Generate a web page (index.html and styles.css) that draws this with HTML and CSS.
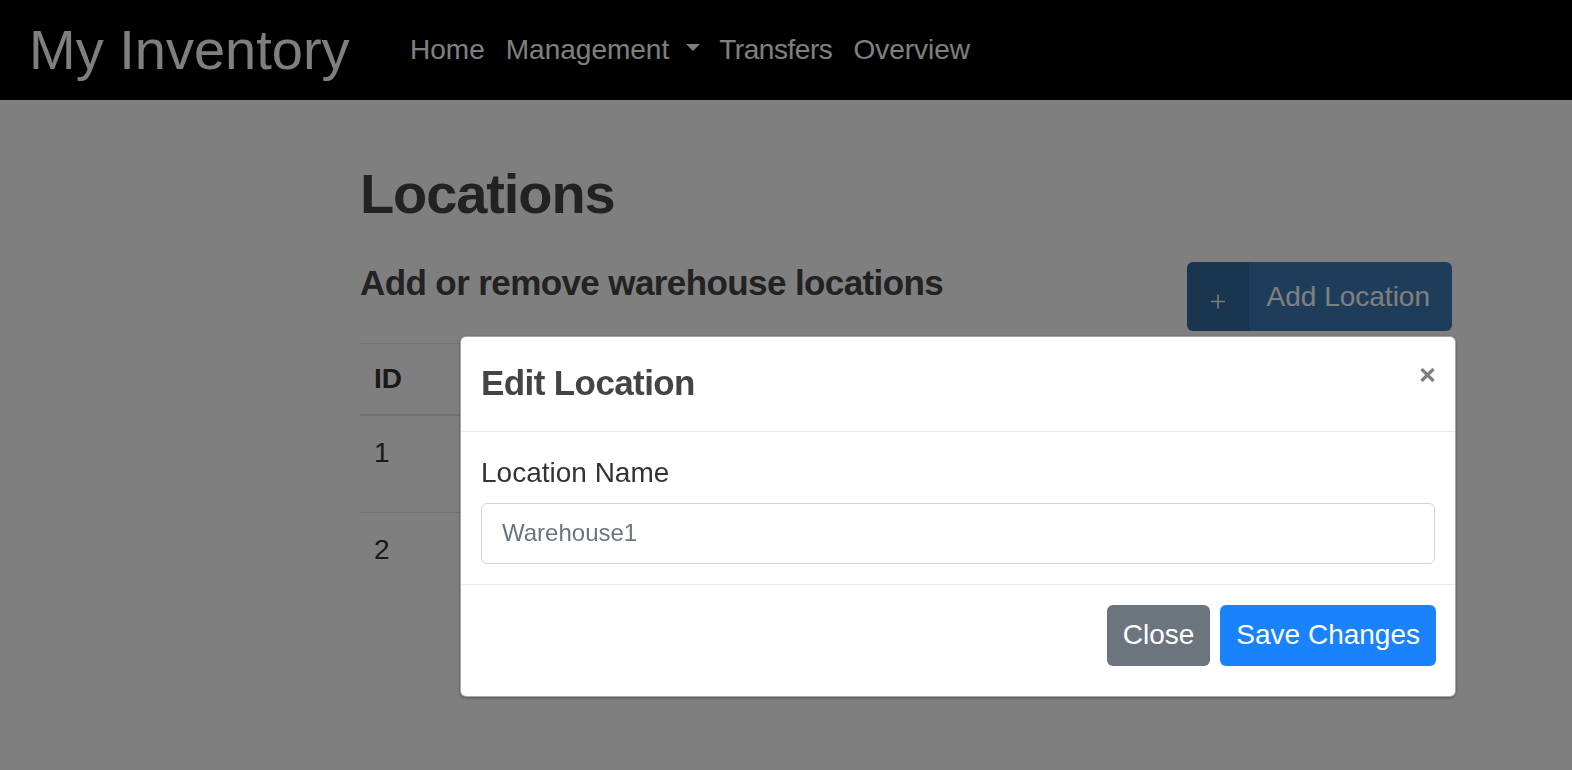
FILE: index.html
```html
<!DOCTYPE html>
<html lang="en">
<head>
<meta charset="utf-8">
<title>My Inventory - Locations</title>
<link rel="stylesheet" href="styles.css">
</head>
<body>
  <nav class="navbar">
    <a class="brand" href="#">My Inventory</a>
    <ul class="nav">
      <li><a class="nav-link" href="#">Home</a></li>
      <li><a class="nav-link dropdown-toggle" href="#">Management<span class="caret"></span></a></li>
      <li><a class="nav-link tight" href="#">Transfers</a></li>
      <li><a class="nav-link" href="#">Overview</a></li>
    </ul>
  </nav>

  <main class="container">
    <h1 class="page-title">Locations</h1>
    <div class="toolbar">
      <h4 class="subtitle">Add or remove warehouse locations</h4>
      <button class="btn-labeled" type="button">
        <span class="btn-label">
          <svg class="plus" width="14" height="15" viewBox="0 0 14 15" aria-hidden="true">
            <path d="M7 0.5V14.5M0 7.5H14" stroke="currentColor" stroke-width="1.7" fill="none"/>
          </svg>
        </span>
        <span class="btn-text">Add Location</span>
      </button>
    </div>

    <table class="table">
      <thead>
        <tr><th class="col-id">ID</th><th></th><th class="col-actions"></th></tr>
      </thead>
      <tbody>
        <tr><td>1</td><td></td><td><span class="row-actions"></span></td></tr>
        <tr><td>2</td><td></td><td><span class="row-actions"></span></td></tr>
      </tbody>
    </table>
  </main>

  <div class="backdrop"></div>

  <div class="modal">
    <div class="modal-dialog">
      <div class="modal-content">
        <div class="modal-header">
          <h5 class="modal-title">Edit Location</h5>
          <button class="close" type="button" aria-label="Close">
            <svg width="15" height="14" viewBox="0 0 15 14" aria-hidden="true">
              <path d="M1.5 1L13.5 13M13.5 1L1.5 13" stroke="currentColor" stroke-width="3.2" fill="none"/>
            </svg>
          </button>
        </div>
        <div class="modal-body">
          <label class="form-label" for="locName">Location Name</label>
          <input class="form-control" id="locName" type="text" value="Warehouse1">
        </div>
        <div class="modal-footer">
          <button class="btn btn-secondary" type="button">Close</button>
          <button class="btn btn-primary" type="button">Save Changes</button>
        </div>
      </div>
    </div>
  </div>
</body>
</html>
```

FILE: styles.css
```css
* { box-sizing: border-box; }

html, body { height: 100%; }

body {
  margin: 0;
  font-family: "Liberation Sans", Arial, Helvetica, sans-serif;
  font-size: 28px;
  line-height: 1.5;
  color: #333;
  background: #fff;
  overflow: hidden;
}

/* ---------- navbar ---------- */
.navbar {
  height: 100px;
  background: #000;
  display: flex;
  align-items: center;
  padding: 0 29px;
}

.brand {
  font-size: 56px;
  line-height: 1.5;
  color: #fff;
  text-decoration: none;
  margin-right: 50px;
}

.nav {
  list-style: none;
  margin: 0;
  padding: 0;
  display: flex;
  align-items: center;
}

.nav-link {
  display: block;
  padding: 0 10.5px;
  color: #fff;
  text-decoration: none;
  font-size: 28px;
  line-height: 1.5;
}

.nav-link.tight { letter-spacing: -0.45px; margin-left: -2px; }

.caret {
  display: inline-block;
  width: 0;
  height: 0;
  margin-left: 17px;
  border-top: 7.5px solid #fff;
  border-left: 7.5px solid transparent;
  border-right: 7.5px solid transparent;
  vertical-align: 8.5px;
}

/* ---------- page ---------- */
.container {
  margin-left: 360px;
  width: 1092px;
  padding-top: 60px;
}

.page-title {
  margin: 0 0 35px;
  font-size: 56px;
  line-height: 1.2;
  font-weight: 700;
  letter-spacing: -1.1px;
  color: #444;
}

.toolbar {
  display: flex;
  justify-content: space-between;
  align-items: flex-start;
}

.subtitle {
  margin: 0;
  font-size: 35px;
  line-height: 1.2;
  font-weight: 700;
  letter-spacing: -0.6px;
  color: #444;
}

.btn-labeled {
  display: inline-flex;
  align-items: stretch;
  height: 69px;
  padding: 0 22px 0 0;
  border: 0;
  border-radius: 6px;
  background: #3c7ab4;
  color: #fff;
  font-family: inherit;
  font-size: 28px;
  line-height: 1.5;
  overflow: hidden;
}

.btn-label {
  width: 62px;
  display: flex;
  align-items: center;
  justify-content: center;
  background: rgba(0, 0, 0, 0.14);
  margin-right: 18px;
}

.plus { margin-top: 9px; color: #f2f2f2; }

.btn-text { display: flex; align-items: center; }

.table {
  width: 100%;
  margin-top: 12px;
  border-collapse: collapse;
  color: #333;
}

.table th,
.table td {
  padding: 14px;
  text-align: left;
  vertical-align: top;
  border-top: 1px solid #dee2e6;
  line-height: 42px;
}

.table tbody td {
  padding-top: 16px;
  padding-bottom: 12px;
}

.table thead th {
  font-weight: 700;
  border-bottom: 2px solid #dee2e6;
}

.col-id { width: 100px; }
.col-actions { width: 320px; }

.row-actions {
  display: block;
  height: 68px;
}

/* ---------- modal ---------- */
.backdrop {
  position: fixed;
  inset: 0;
  background: rgba(0, 0, 0, 0.5);
  z-index: 10;
}

.modal {
  position: fixed;
  inset: 0;
  z-index: 20;
}

.modal-dialog {
  margin: 336px 0 0 460px;
  width: 996px;
}

.modal-content {
  background: #fff;
  border: 1px solid rgba(0, 0, 0, 0.35);
  border-radius: 6px;
  box-shadow: 0 1px 3px rgba(0, 0, 0, 0.35);
}

.modal-header {
  display: flex;
  justify-content: space-between;
  align-items: flex-start;
  padding: 20px 20px 21px;
  border-bottom: 1px solid #e9ecef;
}

.modal-title {
  margin: 0;
  font-size: 35px;
  line-height: 1.5;
  font-weight: 700;
  letter-spacing: -0.6px;
  color: #444;
}

.close {
  margin: 11px 0 0 0;
  padding: 0;
  border: 0;
  background: transparent;
  color: #7f7f7f;
  display: flex;
}

.modal-body {
  padding: 20px;
  border-bottom: 1px solid #e9ecef;
}

.form-label {
  display: block;
  margin-bottom: 9px;
  font-size: 28px;
  line-height: 1.5;
  color: #333;
}

.form-control {
  display: block;
  width: 100%;
  height: 61px;
  padding: 0 20px;
  border: 1px solid #ced4da;
  border-radius: 6px;
  font-family: inherit;
  font-size: 24px;
  color: #6c757d;
  background: #fff;
}

.modal-footer {
  display: flex;
  justify-content: flex-end;
  gap: 10px;
  padding: 20px 19px 30px 20px;
}

.btn {
  height: 61px;
  padding: 0 16px;
  border: 0;
  border-radius: 6px;
  font-family: inherit;
  font-size: 28px;
  line-height: 1;
  color: #fff;
}

.btn-secondary { background: #6c757d; }
.btn-primary { background: #1a82fb; }
```
